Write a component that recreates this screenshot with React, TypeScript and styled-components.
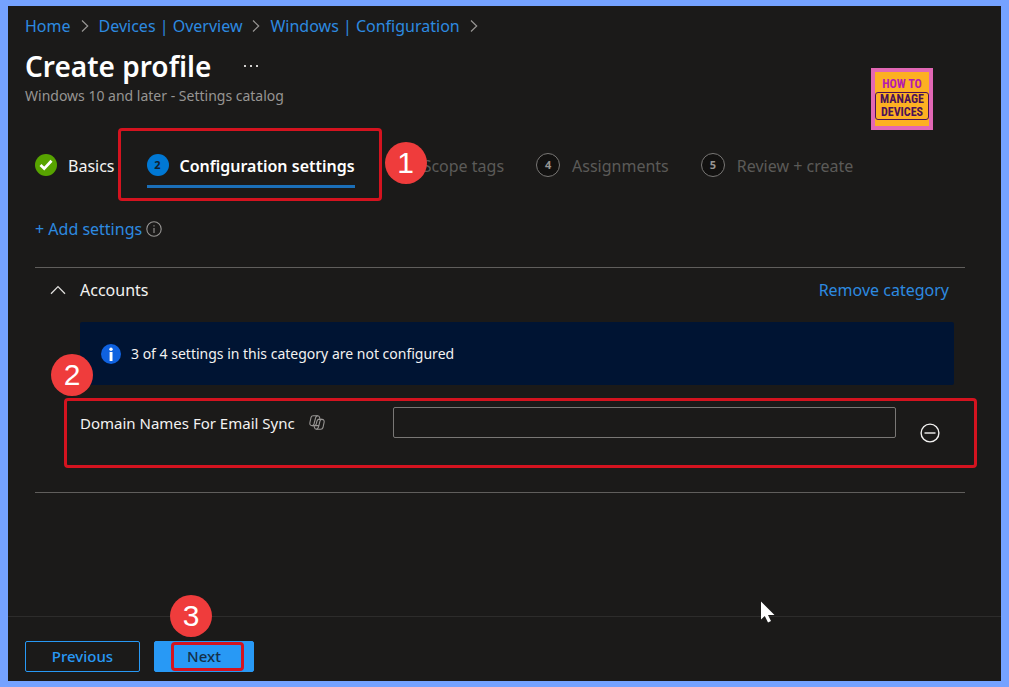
import React from "react";
import styled, { createGlobalStyle, css } from "styled-components";

const color = {
  frame: "#75a2ff",
  page: "#1b1a19",
  link: "#2d8ae0",
  text: "#f3f2f1",
  muted: "#979593",
  disabled: "#5b5a58",
  line: "#605e5c",
  footerLine: "#2d2c2b",
  mark: "#d4131f",
  pin: "#ef3c3c",
  accent: "#2899f5",
};

const Global = createGlobalStyle`
  *, *::before, *::after { box-sizing: border-box; }
  body {
    margin: 0;
    background: ${color.frame};
    color: ${color.text};
    font-family: "Noto Sans", "Open Sans", sans-serif;
    font-size: 16px;
    line-height: 24px;
  }
  button, input { font: inherit; color: inherit; }
`;

const Frame = styled.div`
  display: flex;
  min-height: 100vh;
  padding: 6px 8px;
  background: ${color.frame};
`;

const Page = styled.div`
  position: relative;
  flex: 1;
  min-width: 0;
  display: flex;
  flex-direction: column;
  background: ${color.page};
`;

const Header = styled.header`
  display: flex;
  justify-content: space-between;
  padding: 8px 68px 0 17px;
`;

const Crumbs = styled.ol`
  display: flex;
  align-items: center;
  gap: 8px;
  margin: 0;
  padding: 0;
  list-style: none;
  white-space: nowrap;
`;

const Crumb = styled.li`
  display: flex;
  align-items: center;
  gap: 8px;
`;

const Link = styled.a`
  color: ${color.link};
  text-decoration: none;
`;

const TitleRow = styled.div`
  display: flex;
  align-items: center;
  gap: 32px;
  margin-top: 8px;
`;

const Title = styled.h1`
  margin: 0;
  font-size: 28px;
  line-height: 40px;
  font-weight: 600;
  color: #fff;
`;

const Subtitle = styled.p`
  margin: 0;
  font-size: 14px;
  line-height: 20px;
  color: ${color.muted};
`;

const IconButton = styled.button`
  display: inline-flex;
  padding: 0;
  border: 0;
  background: none;
  cursor: pointer;
`;

const Logo = styled.div`
  display: flex;
  flex-direction: column;
  align-items: center;
  gap: 1px;
  width: 62px;
  height: 62px;
  margin-top: 54px;
  padding-top: 5px;
  border: 4px solid #e267b4;
  background: #fdb022;
  font-family: "Liberation Sans Narrow", "Roboto Condensed", "Liberation Sans", sans-serif;
  font-weight: 700;
  font-size: 12px;
  line-height: 14px;
  color: #b51bb0;
  white-space: nowrap;
`;

const LogoPlate = styled.div`
  display: flex;
  flex-direction: column;
  width: 54px;
  border: 1px solid #4a1058;
  border-radius: 3px;
  text-align: center;
  font-size: 12px;
  line-height: 13px;
  color: #4a1058;
`;

const Steps = styled.ol`
  display: flex;
  gap: 32px;
  margin: 24px 0 0;
  padding: 0 27px;
  list-style: none;
  white-space: nowrap;
`;

const Step = styled.li`
  position: relative;
`;

const StepButton = styled.button<{ $state: "done" | "current" | "todo" }>`
  display: flex;
  align-items: center;
  gap: ${(p) => (p.$state === "todo" ? 12 : 11)}px;
  padding: 0 0 7px;
  border: 0;
  border-bottom: 3px solid transparent;
  background: none;
  color: ${(p) => (p.$state === "todo" ? color.disabled : color.text)};
  ${(p) =>
    p.$state === "current" &&
    css`
      border-bottom-color: #1b6fb8;
      font-weight: 600;
      color: #fff;
    `}
`;

const StepDot = styled.span<{ $state: "done" | "current" | "todo" }>`
  display: inline-flex;
  align-items: center;
  justify-content: center;
  width: ${(p) => (p.$state === "todo" ? 24 : 22)}px;
  height: ${(p) => (p.$state === "todo" ? 24 : 22)}px;
  margin: -2px 0 0;
  border-radius: 50%;
  font-size: 11px;
  line-height: 16px;
  font-weight: 700;
  ${(p) =>
    p.$state === "done"
      ? css`
          background: #57a300;
        `
      : p.$state === "current"
        ? css`
            background: #0078d4;
            color: #10202e;
          `
        : css`
            border: 1px solid #797775;
            background: #121110;
            color: #979593;
          `}
`;

const Mark = styled.span<{ $inset: string }>`
  position: absolute;
  inset: ${(p) => p.$inset};
  border: 3px solid ${color.mark};
  border-radius: 4px;
  pointer-events: none;
`;

const Pin = styled.span<{ $top: number; $left: number }>`
  position: absolute;
  top: ${(p) => p.$top}px;
  left: ${(p) => p.$left}px;
  z-index: 1;
  width: 42px;
  height: 42px;
  border-radius: 50%;
  background: ${color.pin};
  font-family: "Liberation Sans", sans-serif;
  font-size: 30px;
  font-weight: 400;
  line-height: 42px;
  text-align: center;
  color: #fff;
  pointer-events: none;
`;

const Main = styled.main`
  flex: 1;
  padding: 29px 36px 32px 27px;
`;

const Toolbar = styled.div`
  display: flex;
  align-items: center;
  gap: 4px;
`;

const TextButton = styled.button`
  padding: 0;
  border: 0;
  background: none;
  color: ${color.link};
  cursor: pointer;
`;

const Category = styled.section`
  margin-top: 26px;
  padding: 10px 0 24px;
  border-top: 1px solid ${color.line};
  border-bottom: 1px solid ${color.line};
`;

const CategoryHead = styled.div`
  display: flex;
  align-items: center;
  gap: 14px;
  padding: 0 16px 0 15px;
`;

const CategoryTitle = styled.h2`
  flex: 1;
  margin: 0;
  font-size: 16px;
  line-height: 24px;
  font-weight: 400;
`;

const Notice = styled.div`
  position: relative;
  display: flex;
  align-items: center;
  gap: 10px;
  min-height: 63px;
  margin: 20px 11px 0 45px;
  padding: 0 21px;
  border-radius: 2px;
  background: #001433;
  font-size: 14px;
`;

const SettingRow = styled.div`
  position: relative;
  display: flex;
  align-items: flex-start;
  min-height: 61px;
  margin-top: 22px;
  padding: 0 25px 0 45px;
`;

const SettingLabel = styled.div`
  display: flex;
  align-items: center;
  gap: 14px;
  width: 313px;
  height: 31px;
  font-size: 15px;
`;

const TextInput = styled.input`
  flex: 1;
  min-width: 0;
  height: 31px;
  margin-right: 24px;
  padding: 0 8px;
  border: 1px solid #797775;
  border-radius: 2px;
  background: transparent;
`;

const RemoveButton = styled(IconButton)`
  margin-top: 16px;
`;

const Footer = styled.footer`
  display: flex;
  gap: 14px;
  padding: 24px 17px 9px;
  border-top: 1px solid ${color.footerLine};
`;

const FooterButton = styled.button<{ $primary?: boolean }>`
  position: relative;
  min-width: ${(p) => (p.$primary ? 100 : 115)}px;
  height: 31px;
  padding: 0 16px 2px;
  border: 1px solid ${color.accent};
  border-radius: 2px;
  background: ${(p) => (p.$primary ? color.accent : "transparent")};
  color: ${(p) => (p.$primary ? "#14304a" : color.accent)};
  font-size: 15px;
  line-height: 24px;
  font-weight: 500;
  cursor: pointer;
`;

const Pointer = styled.svg`
  position: absolute;
  left: 752px;
  bottom: 58px;
`;

const Chevron = () => (
  <svg width="12" height="14" viewBox="0 0 12 14" fill="none" stroke="#979593" strokeWidth="1.2" aria-hidden="true">
    <path d="M3 1.5 8.7 7 3 12.5" />
  </svg>
);

const Dots = () => (
  <svg width="16" height="4" viewBox="0 0 16 4" fill="#d2d0ce" aria-hidden="true">
    <rect x="1" y="1" width="2" height="2" />
    <rect x="7" y="1" width="2" height="2" />
    <rect x="13" y="1" width="2" height="2" />
  </svg>
);

const Check = () => (
  <svg width="14" height="12" viewBox="0 0 14 12" fill="none" stroke="#fff" strokeWidth="2.8" aria-hidden="true">
    <path d="M1.5 6 5.2 9.6 12.5 1.8" />
  </svg>
);

const InfoOutline = () => (
  <svg width="16" height="16" viewBox="0 0 16 16" fill="none" stroke="#979593" strokeWidth="1.1" aria-hidden="true">
    <circle cx="8" cy="8" r="7.2" />
    <path d="M8 7v5M8 4.2v1.4" />
  </svg>
);

const InfoFilled = () => (
  <svg width="20" height="20" viewBox="0 0 20 20" aria-hidden="true">
    <circle cx="10" cy="10" r="10" fill="#0f62e0" />
    <circle cx="10" cy="5.2" r="1.7" fill="#fff" />
    <rect x="8.6" y="8" width="2.9" height="9" fill="#fff" />
  </svg>
);

const Collapse = () => (
  <svg width="16" height="10" viewBox="0 0 16 10" fill="none" stroke="#e1dfdd" strokeWidth="1.3" aria-hidden="true">
    <path d="M1 8.7 8 1.6l7 7.1" />
  </svg>
);

const Copilot = () => (
  <svg width="16" height="15" viewBox="0 0 16 15" fill="none" stroke="#979593" strokeWidth="1.1" strokeLinejoin="round" strokeLinecap="round" aria-hidden="true">
    <path d="M11 4.3 10.500 2.200C10.200 1.200 9.600.8 8.600.8H4.200C3 .8 2.300 1.400 2 2.500L.9 7.600C.5 9.400 1.300 10.600 3 10.600H5" />
    <path d="M5 10.600 5.500 12.600C5.800 13.700 6.400 14.200 7.400 14.200H11.800C13 14.200 13.700 13.600 14 12.500L15.100 7.400C15.500 5.600 14.700 4.400 13 4.400H9.800" />
    <path d="M8.200.9C7.200 1.200 6.800 2 6.500 3.100L5 9C4.700 10 4.200 10.600 3.200 10.600" />
    <path d="M7.800 14.100C8.800 13.800 9.200 13 9.500 11.900L11 6C11.300 5 11.800 4.400 12.800 4.400" />
    <path d="M9.800 4.400C8.700 4.400 8.300 5 8 6L7.200 9C6.900 10 6.400 10.600 5.500 10.600H9.700" />
  </svg>
);

const Minus = () => (
  <svg width="20" height="20" viewBox="0 0 20 20" fill="none" stroke="#f3f2f1" strokeWidth="1.4" aria-hidden="true">
    <circle cx="10" cy="10" r="8.900" />
    <path d="M4.500 10h11" />
  </svg>
);

const crumbs = ["Home", "Devices | Overview", "Windows | Configuration"];

const steps: { label: string; state: "done" | "current" | "todo" }[] = [
  { label: "Basics", state: "done" },
  { label: "Configuration settings", state: "current" },
  { label: "Scope tags", state: "todo" },
  { label: "Assignments", state: "todo" },
  { label: "Review + create", state: "todo" },
];

export default function App() {
  return (
    <>
      <Global />
      <Frame>
        <Page>
          <Header>
            <div>
              <nav aria-label="Breadcrumb">
                <Crumbs>
                  {crumbs.map((c) => (
                    <Crumb key={c}>
                      <Link href="#">{c}</Link>
                      <Chevron />
                    </Crumb>
                  ))}
                </Crumbs>
              </nav>
              <TitleRow>
                <Title>Create profile</Title>
                <IconButton type="button" aria-label="More">
                  <Dots />
                </IconButton>
              </TitleRow>
              <Subtitle>Windows 10 and later - Settings catalog</Subtitle>
            </div>
            <Logo>
              <span>HOW TO</span>
              <LogoPlate>
                <span>MANAGE</span>
                <span>DEVICES</span>
              </LogoPlate>
            </Logo>
          </Header>

          <Steps>
            {steps.map((s, i) => (
              <Step key={s.label}>
                <StepButton type="button" $state={s.state}>
                  <StepDot $state={s.state}>{s.state === "done" ? <Check /> : i + 1}</StepDot>
                  {s.label}
                </StepButton>
                {s.state === "current" && (
                  <>
                    <Mark $inset="-26px -27px -13px -29px" />
                    <Pin $top={-12} $left={238}>1</Pin>
                  </>
                )}
              </Step>
            ))}
          </Steps>

          <Main>
            <Toolbar>
              <TextButton type="button">+ Add settings</TextButton>
              <IconButton type="button" aria-label="About settings">
                <InfoOutline />
              </IconButton>
            </Toolbar>

            <Category>
              <CategoryHead>
                <IconButton type="button" aria-label="Collapse Accounts">
                  <Collapse />
                </IconButton>
                <CategoryTitle>Accounts</CategoryTitle>
                <TextButton type="button">Remove category</TextButton>
              </CategoryHead>
              <Notice>
                <InfoFilled />
                3 of 4 settings in this category are not configured
                <Pin $top={32} $left={-29}>2</Pin>
              </Notice>
              <SettingRow>
                <SettingLabel>
                  <label htmlFor="domains">Domain Names For Email Sync</label>
                  <Copilot />
                </SettingLabel>
                <TextInput id="domains" type="text" />
                <RemoveButton type="button" aria-label="Remove setting">
                  <Minus />
                </RemoveButton>
                <Mark $inset="-9px -12px 0 29px" />
              </SettingRow>
            </Category>
          </Main>

          <Footer>
            <FooterButton type="button">Previous</FooterButton>
            <FooterButton type="button" $primary>
              Next
              <Mark $inset="0 9px 0 16px" />
              <Pin $top={-47} $left={15}>3</Pin>
            </FooterButton>
          </Footer>

          <Pointer width="15" height="22" viewBox="0 0 15 22" fill="#fff" aria-hidden="true">
            <path d="M1 0.500V18.500L4.800 15 8 21.500 11 20 8 14H14.500Z" />
          </Pointer>
        </Page>
      </Frame>
    </>
  );
}
